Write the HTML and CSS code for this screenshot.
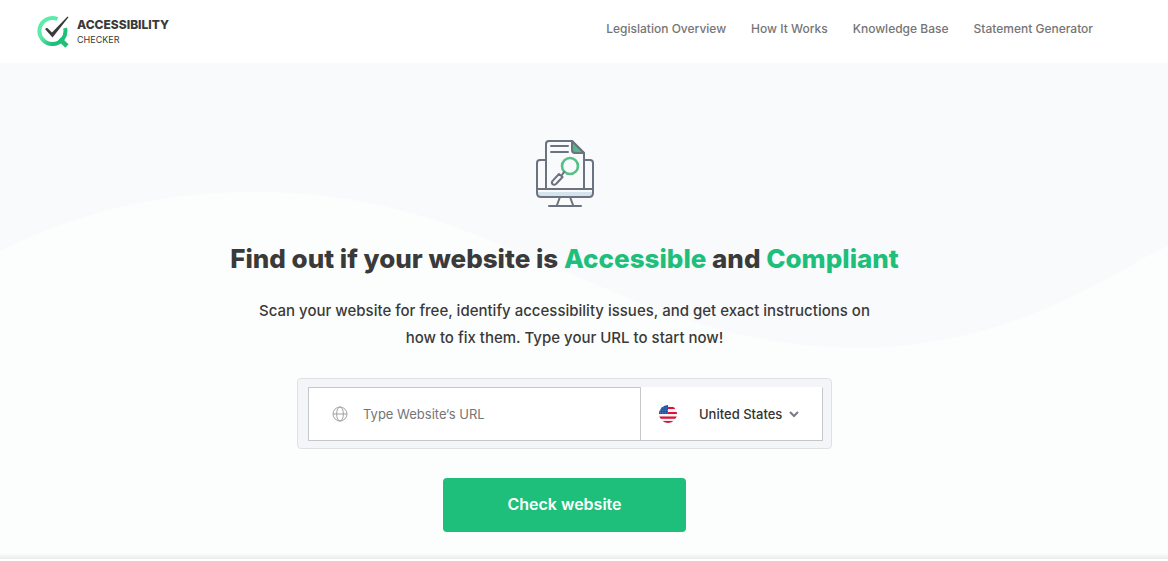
FILE: index.html
```html
<!DOCTYPE html>
<html lang="en">
<head>
    <meta charset="UTF-8">
    <meta name="viewport" content="width=device-width, initial-scale=1.0">
    <title>Accessibility Checker</title>
    <link rel="stylesheet" href="styles.css">
</head>
<body>
    <header class="header">
        <a href="#" class="logo">
            <svg class="logo-mark" viewBox="0 0 32 34" aria-hidden="true">
                <defs>
                    <linearGradient id="ring" x1="0" y1="0" x2="1" y2="1">
                        <stop offset="0.4" stop-color="#5eeba9"/>
                        <stop offset="0.75" stop-color="#1ebf7a"/>
                    </linearGradient>
                </defs>
                <path d="M20 4A13 13 0 1 0 27.6 13" fill="none" stroke="url(#ring)" stroke-width="4"/>
                <path d="M22 24L29.500 31" stroke="#1ebf7a" stroke-width="4.6"/>
                <path d="M7.5 14L9.5 12.8L14.5 17.5L30 1.6L31 2.2L15 22.5Z" fill="#3a3a3a"/>
            </svg>
            <span class="logo-text">
                <strong>ACCESSIBILITY</strong>
                <span>CHECKER</span>
            </span>
        </a>
        <nav class="nav">
            <a href="#">Legislation Overview</a>
            <a href="#">How It Works</a>
            <a href="#">Knowledge Base</a>
            <a href="#">Statement Generator</a>
        </nav>
    </header>

    <main class="hero">
        <svg class="wave" viewBox="0 0 1168 496" preserveAspectRatio="none" aria-hidden="true">
            <path d="M0 188C80 148 165 129 253 129C405 129 490 180 581 215C665 252 750 285 857 285C970 285 1060 245 1140 197L1168 183V496H0Z" fill="#fcfefd"/>
        </svg>
        <div class="hero-content">
            <svg class="hero-icon" viewBox="0 0 60 70" fill="none" stroke="#6b7280" stroke-width="2" stroke-linecap="round" stroke-linejoin="round" aria-hidden="true">
                <path d="M3 52H57V56Q57 59 54 59H6Q3 59 3 56Z" fill="#d5e3ec" stroke="none"/>
                <path d="M3 52H57V54H3Z" fill="#f9fafc" stroke="none"/>
                <path d="M10 22H5Q2 22 2 25V55Q2 59 6 59H54Q58 59 58 55V25Q58 22 55 22H49"/>
                <path d="M2 51H58M11 51V6Q11 3 14 3H37L49 15V51"/>
                <path d="M37 3V12Q37 15 40 15H49Z" fill="#4dbb82"/>
                <path d="M16 8H33M16 14H33"/>
                <circle cx="35" cy="28" r="8" stroke="#57c088" stroke-width="2.6"/>
                <path d="M29 34L27 37"/>
                <path d="M24 36L27.6 39L21 46Q19 47.6 17.4 46Q16 44.4 18 42.4Z"/>
                <path d="M25 59L22 67M35 59L38 67M14 68H46"/>
            </svg>
            <h1>Find out if your website is <span class="accent">Accessible</span> and <span class="accent">Compliant</span></h1>
            <p class="intro">Scan your website for free, identify accessibility issues, and get exact instructions on how to fix them. Type your URL to start now!</p>
            <form class="scan-form" onsubmit="return false">
                <div class="fields">
                    <label class="url-field">
                        <svg class="globe" viewBox="0 0 16 16" fill="none" stroke="#a3a3a3" aria-hidden="true">
                            <circle cx="8" cy="8" r="7"/>
                            <ellipse cx="8" cy="8" rx="3.4" ry="7"/>
                            <path d="M1 8H15"/>
                        </svg>
                        <input type="text" placeholder="Type Website‘s URL" aria-label="Website URL">
                    </label>
                    <label class="country-field">
                        <svg class="flag" viewBox="0 0 18 18" aria-hidden="true">
                            <clipPath id="round"><circle cx="9" cy="9" r="9"/></clipPath>
                            <g clip-path="url(#round)">
                                <path d="M0 0H18V18H0Z" fill="#f5f3f5"/>
                                <path d="M0 3H18M0 8H18M0 12.6H18M0 17H18" stroke="#db1237" stroke-width="2.2"/>
                                <path d="M0 0H9V9H0Z" fill="#1d55ad"/>
                                <path d="M2 3H9M1 5.4H9M1 7.8H9" stroke="#7fa3d8" stroke-width="0.8" stroke-dasharray="0.9 1.5"/>
                            </g>
                        </svg>
                        <select aria-label="Country">
                            <option>United States</option>
                        </select>
                        <svg class="chevron" viewBox="0 0 10 8" fill="none" stroke="#777c88" stroke-width="2" aria-hidden="true">
                            <path d="M1 2L5 6L9 2"/>
                        </svg>
                    </label>
                </div>
                <button type="submit" class="check-btn">Check website</button>
            </form>
        </div>
    </main>
</body>
</html>
```
FILE: styles.css
```css
* { box-sizing: border-box; }
body {
    margin: 0;
    font-family: Inter, "Liberation Sans", sans-serif;
    color: #3a3a3a;
    background-color: #fff;
}
a { text-decoration: none; color: inherit; }
svg { display: block; flex-shrink: 0; }

.header {
    display: flex;
    justify-content: space-between;
    align-items: center;
    height: 63px;
    padding: 0 75px 0 37px;
}
.logo { display: flex; align-items: center; gap: 7px; }
.logo-mark { width: 33px; height: 34px; }
.logo-text { display: flex; flex-direction: column; font-size: 9px; line-height: 15px; }
.logo-text strong { font-size: 12px; font-weight: 800; }
.nav { display: flex; gap: 25px; padding-bottom: 6px; }
.nav a { font-size: 12px; font-weight: 500; line-height: 18px; color: #757575; }

.hero {
    position: relative;
    background-color: #f9fafc;
    padding: 74px 39px 27px 0;
}
.hero::after {
    content: "";
    position: absolute;
    left: 0;
    right: 0;
    bottom: 0;
    height: 6px;
    background: linear-gradient(rgba(0, 0, 0, 0), rgba(0, 0, 0, 0.07));
}
/* background wave, behind the content */
.wave { position: absolute; top: 0; left: 0; width: 100%; height: 100%; }
.hero-content {
    position: relative;
    display: flex;
    flex-direction: column;
    align-items: center;
    text-align: center;
}
.hero-icon { width: 60px; height: 72px; }
h1 { margin: 32px 0 0; font-size: 26px; font-weight: 800; line-height: 36px; }
.accent { color: #1ebf7a; }
.intro { max-width: 640px; margin: 20px 0 0; font-size: 15px; font-weight: 500; line-height: 27px; }

.scan-form {
    display: flex;
    flex-direction: column;
    align-items: center;
    gap: 29px;
    width: 535px;
    max-width: 100%;
    margin-top: 27px;
}
.fields {
    display: flex;
    width: 100%;
    padding: 8px 8px 7px 10px;
    background-color: #f4f5f8;
    border: 1px solid #e0e1e5;
    border-radius: 4px;
}
.url-field, .country-field {
    display: flex;
    align-items: center;
    height: 54px;
    background-color: #fff;
    border: 1px solid #c5c7ca;
}
.url-field { flex: 1; gap: 15px; padding-left: 23px; }
.globe { width: 16px; height: 16px; }
input, select {
    min-width: 0;
    padding: 0;
    border: none;
    background: none;
    font-family: inherit;
    font-size: 13px;
    font-weight: 500;
    color: #333;
}
input { flex: 1; }
input::placeholder { color: #757575; opacity: 1; font-weight: 400; }
.country-field { width: 182px; padding: 0 23px 0 18px; border-top-color: #fff; border-left: none; }
.flag { width: 18px; height: 18px; }
select { appearance: none; margin-left: 22px; cursor: pointer; }
.chevron { width: 10px; height: 8px; margin-left: auto; }
.check-btn {
    width: 243px;
    height: 54px;
    padding: 0 0 2px;
    border: none;
    border-radius: 4px;
    background-color: #1ebf7a;
    color: #fff;
    font-family: inherit;
    font-size: 16px;
    font-weight: 600;
    cursor: pointer;
}
.check-btn:hover { background-color: #19a86b; }
```
